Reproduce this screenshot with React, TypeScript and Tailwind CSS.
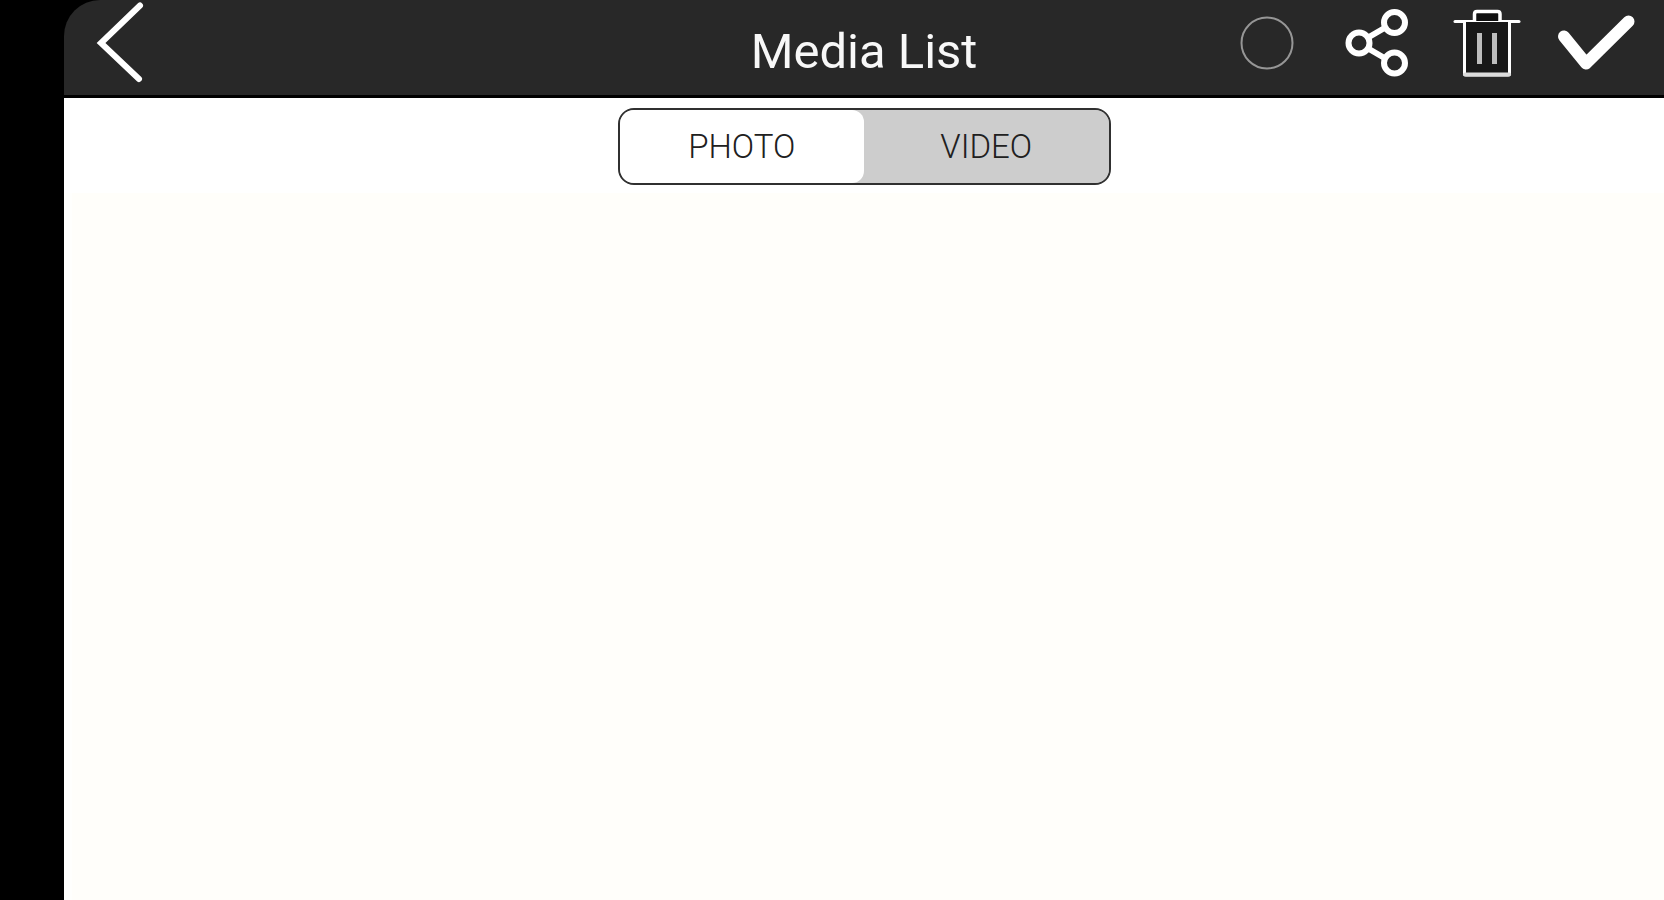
import { useState } from 'react';
import clsx from 'clsx';

type Tab = 'PHOTO' | 'VIDEO';

const tabs: Tab[] = ['PHOTO', 'VIDEO'];

function IconButton({ label, children }: { label: string; children: React.ReactNode }) {
  return (
    <button type="button" aria-label={label} className="w-[110px] h-[86px] shrink-0 text-white">
      <svg
        viewBox="0 0 110 86"
        className="w-full h-full"
        fill="none"
        stroke="currentColor"
        strokeLinecap="round"
        strokeLinejoin="round"
      >
        {children}
      </svg>
    </button>
  );
}

export default function App() {
  const [tab, setTab] = useState<Tab>('PHOTO');

  return (
    <div className="min-h-screen bg-black pl-16 flex flex-col font-['Roboto','Liberation_Sans',sans-serif]">
      <header className="grid grid-cols-[1fr_auto_1fr] items-start h-[98px] bg-[#282828] border-b-3 border-black rounded-tl-[36px]">
        <div>
          <IconButton label="Back">
            <path d="M76 5.500 L37 43 L75 79" strokeWidth="6" strokeLinejoin="miter" />
          </IconButton>
        </div>

        <h1 className="pt-5 text-[49px] leading-[64px] text-[#f8f8f8] whitespace-nowrap">Media List</h1>

        <div className="flex justify-end pr-3">
          <IconButton label="Select all">
            <circle cx="55" cy="43" r="25.500" stroke="#969696" strokeWidth="2" />
          </IconButton>
          <IconButton label="Share">
            <g strokeWidth="6">
              <circle cx="37" cy="43" r="10.500" />
              <circle cx="72.500" cy="22.500" r="10.500" />
              <circle cx="72.500" cy="63" r="10.500" />
              <path d="M47 37 L62.500 28 M47 49 L62.500 58" />
            </g>
          </IconButton>
          <IconButton label="Delete">
            <path d="M23 21.500 H87" strokeWidth="3" />
            <path d="M42.500 21 V14 Q42.500 11.500 45 11.500 H65.500 Q68 11.500 68 14 V21" strokeWidth="3.500" fill="#101010" />
            <path d="M32.500 22 V74 Q32.500 75 34 75 H76 Q77.500 75 77.500 74 V22" strokeWidth="3" fill="#181818" />
            <path d="M33 74.500 H77" strokeWidth="4" stroke="#dcdcdc" />
            <path d="M47.500 33 V64 M62.500 33 V64" strokeWidth="5" stroke="#bdbdbd" strokeLinecap="butt" />
          </IconButton>
          <IconButton label="Done">
            <path d="M22 36.500 L44 63.500 L86.500 21.500" strokeWidth="12" />
          </IconButton>
        </div>
      </header>

      <div className="flex justify-center bg-white pt-2.5 pb-2">
        <div
          role="tablist"
          aria-label="Media type"
          className="flex w-[493px] h-[77px] rounded-2xl border-2 border-[#303030] bg-[#cdcdcd] overflow-hidden"
        >
          {tabs.map(t => (
            <button
              key={t}
              type="button"
              role="tab"
              aria-selected={tab === t}
              onClick={() => setTab(t)}
              className={clsx(
                'flex-1 rounded-xl text-[33px] font-light text-[#202020]',
                tab === t ? 'bg-white' : 'bg-[#cdcdcd]'
              )}
            >
              {t}
            </button>
          ))}
        </div>
      </div>

      <main className="flex-1 bg-[#fffefa] border-l-8 border-[#fffffd]" />
    </div>
  );
}
